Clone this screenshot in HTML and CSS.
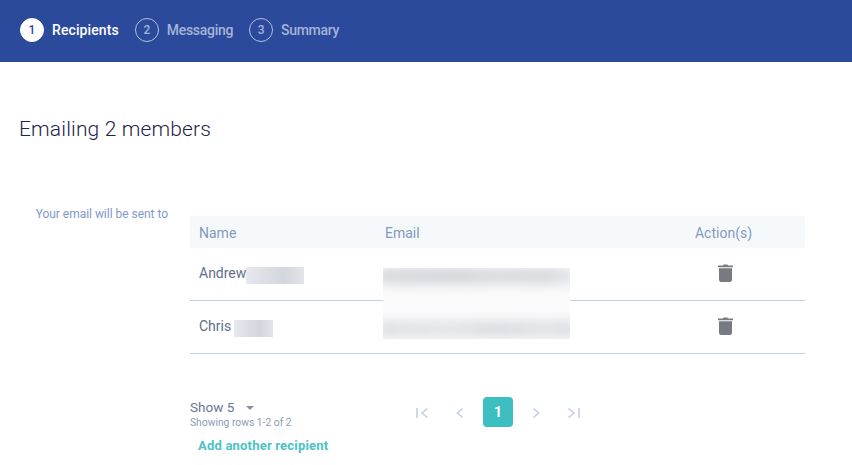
FILE: index.html
```html
<!DOCTYPE html>
<html lang="en">
<head>
<meta charset="utf-8">
<title>Emailing 2 members</title>
<link rel="stylesheet" href="styles.css">
</head>
<body>
<header class="stepbar">
  <div class="step step-active"><span class="step-num">1</span><span class="step-label">Recipients</span></div>
  <div class="step"><span class="step-num">2</span><span class="step-label">Messaging</span></div>
  <div class="step"><span class="step-num">3</span><span class="step-label">Summary</span></div>
</header>
<main class="content">
  <h1 class="title">Emailing 2 members</h1>
  <div class="layout">
    <div class="side-label">Your email will be sent to</div>
    <div class="panel">
      <div class="table">
        <div class="row row-head">
          <div class="cell-name">Name</div>
          <div class="cell-email">Email</div>
          <div class="cell-action">Action(s)</div>
        </div>
        <div class="row row-body">
          <div class="cell-name">Andrew<span class="redact redact-a"><i></i></span></div>
          <div class="cell-email"></div>
          <div class="cell-action">
            <svg class="trash" viewBox="0 0 15 18" aria-hidden="true"><path d="M0 1.500h5L5.600.4h3.800L10 1.500h5v1.700H0z"/><path d="M1 4.200h13v11.600c0 1.200-.9 2.200-2 2.200H3c-1.100 0-2-1-2-2.200z"/></svg>
          </div>
        </div>
        <div class="row row-body">
          <div class="cell-name">Chris<span class="redact redact-c"><i></i></span></div>
          <div class="cell-email"></div>
          <div class="cell-action">
            <svg class="trash" viewBox="0 0 15 18" aria-hidden="true"><path d="M0 1.500h5L5.600.4h3.800L10 1.500h5v1.700H0z"/><path d="M1 4.200h13v11.600c0 1.200-.9 2.200-2 2.200H3c-1.100 0-2-1-2-2.200z"/></svg>
          </div>
        </div>
        <div class="redact-email"><i class="band band-1"></i><i class="band band-2"></i></div>
      </div>
      <div class="footer">
        <div class="pager-info">
          <div class="show">Show 5<span class="caret"></span></div>
          <div class="rows-note">Showing rows 1-2 of 2</div>
        </div>
        <nav class="pager">
          <svg class="pg-icon" viewBox="0 0 14 14" aria-hidden="true"><path d="M2 2v10M12.500 2.500 7 7l5.500 4.500"/></svg>
          <svg class="pg-icon" viewBox="0 0 14 14" aria-hidden="true"><path d="M9.500 2.500 4.500 7l5 4.500"/></svg>
          <span class="pg-current">1</span>
          <svg class="pg-icon" viewBox="0 0 14 14" aria-hidden="true"><path d="M4.500 2.500 9.500 7l-5 4.500"/></svg>
          <svg class="pg-icon" viewBox="0 0 14 14" aria-hidden="true"><path d="M12 2v10M1.500 2.500 7 7l-5.500 4.500"/></svg>
        </nav>
      </div>
      <a class="add-link" href="#">Add another recipient</a>
    </div>
  </div>
</main>
</body>
</html>
```
FILE: styles.css
```css
* { box-sizing: border-box; }
html, body { margin: 0; padding: 0; }
body {
  width: 852px;
  height: 465px;
  overflow: hidden;
  background: #fff;
  font-family: Roboto, "Liberation Sans", sans-serif;
  color: #5b6b8c;
}
.stepbar {
  height: 62px;
  background: #2b4a9b;
  display: flex;
  align-items: center;
  padding: 0 0 2px 20px;
  gap: 16px;
}
.step {
  display: flex;
  align-items: center;
  gap: 8px;
  color: #a6b3d8;
  font-size: 14px;
  font-weight: 500;
  letter-spacing: -0.3px;
}
.step-num {
  width: 24px;
  height: 24px;
  border-radius: 50%;
  border: 1px solid #b4bfdf;
  display: flex;
  align-items: center;
  justify-content: center;
  font-size: 12px;
}
.step-active { color: #fff; letter-spacing: 0.1px; }
.step-active .step-num {
  background: #fff;
  border-color: #fff;
  color: #2b4a9b;
}
.content { padding: 55px 47px 0 19px; }
.title {
  margin: 0;
  font-size: 21px;
  line-height: 24px;
  font-weight: 300;
  letter-spacing: 0.15px;
  color: #1f2547;
}
.layout {
  display: flex;
  margin-top: 75px;
}
.side-label {
  width: 149px;
  margin-top: -9px;
  text-align: right;
  color: #7f9ac6;
  font-size: 12px;
  line-height: 14px;
  letter-spacing: -0.03px;
}
.panel {
  width: 615px;
  margin-left: 22px;
}
.table { position: relative; }
.row {
  display: grid;
  grid-template-columns: 186px 285px 1fr;
  align-items: center;
  padding-left: 9px;
}
.row-head {
  height: 32px;
  background: #f6f9fc;
  color: #8299c0;
  font-size: 14px;
  padding-top: 2px;
}
.row-body {
  height: 53px;
  border-bottom: 1px solid #c3d2e2;
  font-size: 14px;
  color: #5e6e8c;
}
.cell-name { white-space: nowrap; }
.cell-action {
  display: flex;
  justify-content: center;
  padding-right: 28px;
}
.trash {
  width: 15px;
  height: 18px;
  margin: -2px 0 0 3px;
  fill: #777a80;
}
.redact {
  display: inline-block;
  overflow: hidden;
  height: 17px;
  vertical-align: middle;
  background: #e4e6ea;
}
.redact i {
  display: block;
  width: 100%;
  height: 100%;
  background: linear-gradient(90deg, #e6e8ec, #d3d6dc 65%, #e2e4e8);
}
.redact-a { width: 58px; margin: 0 0 -1px 0; }
.redact-c { width: 39px; margin: 0 0 -1px 3px; }
.redact-email {
  position: absolute;
  left: 193px;
  top: 52px;
  width: 187px;
  height: 71px;
  overflow: hidden;
  background: #fbfbfc;
}
.band {
  position: absolute;
  left: -6px;
  right: -6px;
  height: 16px;
  background: linear-gradient(90deg, #d6d8dd, #d0d3d8 40%, #d8dade 60%, #d3d6db 85%, #e6e7ea);
  filter: blur(6px);
}
.band-1 { top: 0; }
.band-2 { bottom: 2px; background: linear-gradient(90deg, #dcdee3, #e2e4e8 35%, #d9dbe0 60%, #dfe1e5 85%, #d9dbe0); }
.footer {
  display: flex;
  align-items: flex-start;
  margin-top: 45px;
}
.pager-info { width: 225px; }
.show {
  font-size: 13.500px;
  line-height: 16px;
  color: #6b7790;
}
.caret {
  display: inline-block;
  margin-left: 12px;
  vertical-align: middle;
  border-left: 4px solid transparent;
  border-right: 4px solid transparent;
  border-top: 4px solid #868fa8;
}
.rows-note {
  font-size: 10.300px;
  line-height: 13px;
  margin-top: 1px;
  color: #8e9cb8;
}
.pager {
  display: flex;
  align-items: center;
  gap: 24px;
  margin-top: -2px;
}
.pg-icon {
  width: 14px;
  height: 14px;
  margin-top: 1px;
  fill: none;
  stroke: #c3cfe0;
  stroke-width: 1.6;
}
.pg-current {
  width: 30px;
  height: 30px;
  border-radius: 4px;
  background: #3dbfc1;
  color: #fff;
  font-size: 14px;
  font-weight: 700;
  display: flex;
  align-items: center;
  justify-content: center;
  margin: 0 -8px;
}
.add-link {
  display: block;
  margin: 9px 0 0 8px;
  font-size: 13px;
  line-height: 16px;
  font-weight: 700;
  letter-spacing: 0.2px;
  color: #4cc3c5;
  text-decoration: none;
}
```
